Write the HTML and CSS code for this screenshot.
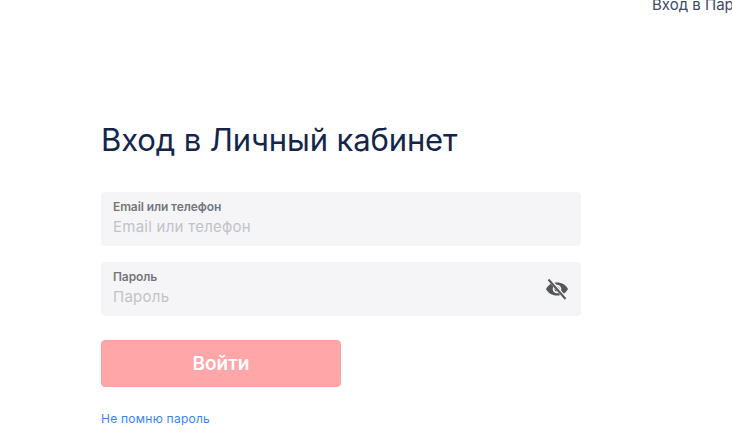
FILE: index.html
```html
<!DOCTYPE html>
<html lang="en">
<head>
    <meta charset="UTF-8">
    <title>Вход в Личный кабинет</title>
    <link rel="stylesheet" href="styles.css">
</head>
<body>
    <div class="top">
        <a class="top-link" href="#">Вход в Партнёрский кабинет</a>
    </div>
    <div class="wrapper">
        <h1>Вход в Личный кабинет</h1>
        <div class="field">
            <div class="field-text">
                <div class="field-label">Email или телефон</div>
                <div class="field-value">Email или телефон</div>
            </div>
        </div>
        <div class="field">
            <div class="field-text">
                <div class="field-label">Пароль</div>
                <div class="field-value">Пароль</div>
            </div>
            <svg class="eye" viewBox="0 0 24 24" width="24" height="24">
                <path fill="#55565c" d="M12 5.500C7 5.500 2.700 8.200 1 12c1.700 3.800 6 6.500 11 6.500s9.300-2.700 11-6.500c-1.700-3.800-6-6.500-11-6.500zm0 10.800a4.300 4.300 0 1 1 0-8.600 4.300 4.300 0 0 1 0 8.600z"/>
                <path fill="#55565c" d="M12 9.500a2.500 2.500 0 1 0 0 5 2.500 2.500 0 0 0 0-5z"/>
                <path fill="none" stroke="#f5f5f7" stroke-width="3.600" d="M4.500 2.500l16 19"/>
                <path fill="none" stroke="#55565c" stroke-width="2" d="M3.500 2.500l17 19.500"/>
            </svg>
        </div>
        <button class="submit">Войти</button>
        <a class="forgot" href="#">Не помню пароль</a>
    </div>
</body>
</html>
```

FILE: styles.css
```css
* {
    margin: 0;
    padding: 0;
    box-sizing: border-box;
}
html, body {
    height: 100%;
    overflow: hidden;
}
body {
    background-color: #fff;
    font-family: Inter, "Noto Sans", sans-serif;
}
.top {
    height: 14px;
    padding-left: 652px;
    overflow: hidden;
}
.top-link {
    display: block;
    margin-top: -4px;
    color: #404a69;
    font-size: 15px;
    line-height: 18px;
    white-space: nowrap;
    text-decoration: none;
}
.wrapper {
    width: 480px;
    margin-left: 101px;
    padding-top: 106px;
}
h1 {
    color: #14254a;
    font-size: 31px;
    font-weight: 400;
    line-height: 40px;
    letter-spacing: -0.12px;
    margin-bottom: 32px;
}
.field {
    display: flex;
    align-items: center;
    justify-content: space-between;
    height: 54px;
    margin-bottom: 16px;
    padding: 0 12px;
    background-color: #f5f5f7;
    border-radius: 4px;
}
.field-label {
    color: #75757d;
    font-size: 12px;
    font-weight: 600;
    line-height: 14px;
    letter-spacing: -0.1px;
    margin-top: -2px;
}
.field-value {
    color: #c2c2c6;
    font-size: 15px;
    line-height: 20px;
    letter-spacing: 0.25px;
    margin-top: 3px;
}
.submit {
    display: block;
    width: 240px;
    height: 47px;
    margin-top: 24px;
    border: 1px solid #ff9ea3;
    border-radius: 4px;
    background-color: #ffa6a9;
    color: #fff;
    font-family: inherit;
    font-size: 19px;
    font-weight: 600;
}
.forgot {
    display: block;
    margin-top: 24px;
    color: #3a83f7;
    font-size: 12px;
    line-height: 16px;
    letter-spacing: 0.25px;
    text-decoration: none;
}
```
